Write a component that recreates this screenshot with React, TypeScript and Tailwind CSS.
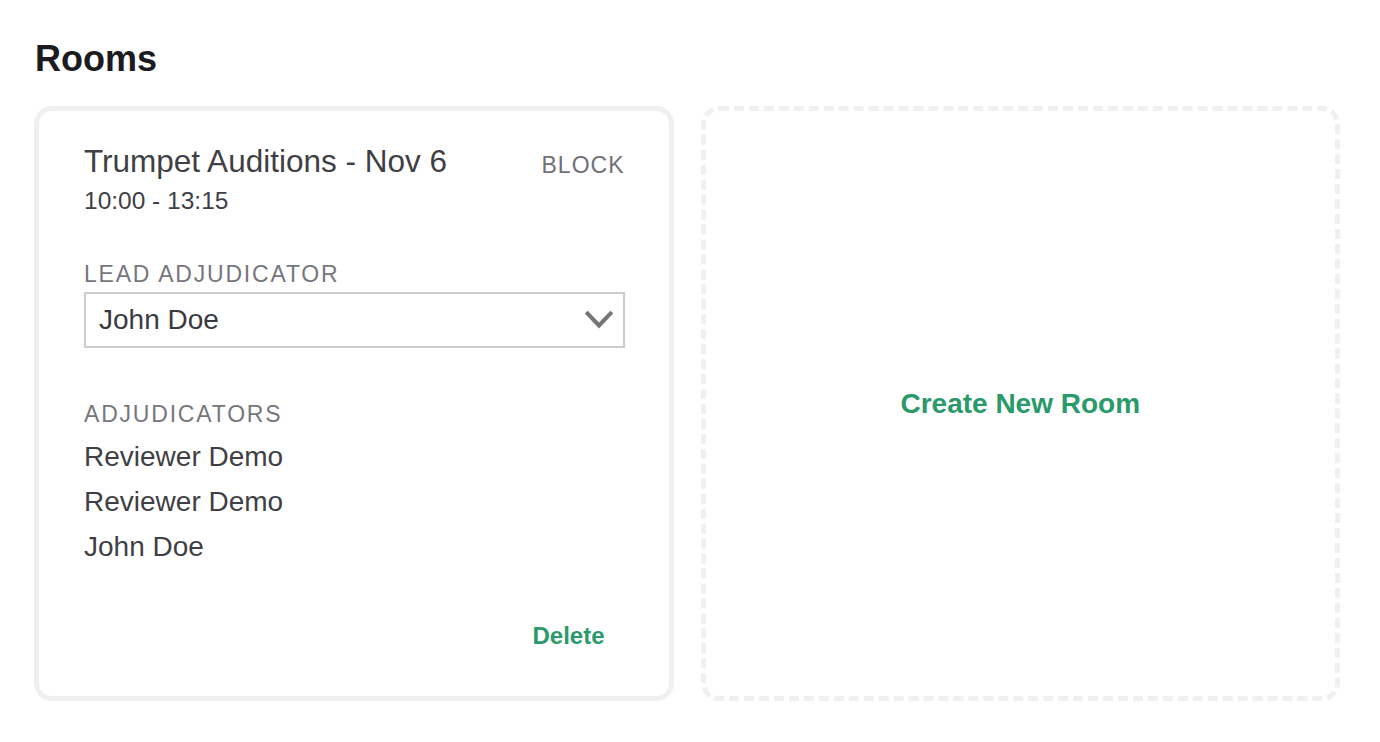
const adjudicators = ['Reviewer Demo', 'Reviewer Demo', 'John Doe'];

function ChevronDown() {
    return (
        <svg width="28" height="18" viewBox="0 0 28 18" fill="none" className="shrink-0">
            <polyline
                points="2.5,2.5 14,14.5 25.5,2.5"
                stroke="#767676"
                strokeWidth="4"
                strokeLinecap="square"
                strokeLinejoin="miter"
            />
        </svg>
    );
}

function RoomCard() {
    return (
        <div className="rounded-[18px] border-[5px] border-[#f0f0f0] bg-white pt-[35px] pb-[48px] pl-[45px] pr-[44px]">
            {/* Header */}
            <div className="flex items-start justify-between">
                <div>
                    <div className="text-[31.5px] leading-[31px] text-[#3f3f45]">Trumpet Auditions - Nov 6</div>
                    <div className="mt-[12px] text-[24.5px] leading-[24px] text-[#3f3f45]">10:00 - 13:15</div>
                </div>
                <div className="mt-[7px] text-[23px] leading-[24px] tracking-[1px] text-[#717077]">BLOCK</div>
            </div>

            {/* Lead adjudicator */}
            <div className="mt-[50px] text-[23px] leading-[22px] tracking-[1.8px] text-[#77767d]">LEAD ADJUDICATOR</div>
            <div className="mt-[7px] flex h-[56px] items-center justify-between border-2 border-[#cccccc] bg-white pl-[13px] pr-[10px]">
                <span className="text-[28px] leading-[28px] text-[#3a3a3f]">John Doe</span>
                <ChevronDown />
            </div>

            {/* Adjudicators */}
            <div className="mt-[55px] text-[23px] leading-[22px] tracking-[1.8px] text-[#77767d]">ADJUDICATORS</div>
            <ul className="mt-[9px]">
                {adjudicators.map((name, i) => (
                    <li key={i} className="text-[28px] leading-[45px] text-[#3f3f45]">
                        {name}
                    </li>
                ))}
            </ul>

            <div className="mt-[55px] flex justify-end pr-[20px]">
                <button type="button" className="text-[24px] leading-[24px] font-bold text-[#2a9a6a]">
                    Delete
                </button>
            </div>
        </div>
    );
}

export default function App() {
    return (
        <div className="min-h-screen bg-white pt-[41px] pl-[34px] pr-[40px]" style={{ fontFamily: '"Liberation Sans", Arial, Helvetica, sans-serif' }}>
            <h1 className="ml-[1px] text-[36px] leading-[36px] font-bold text-[#1b1b20]">Rooms</h1>

            <div className="mt-[29px] grid grid-cols-2 gap-[27px]">
                <RoomCard />
                <button
                    type="button"
                    className="flex items-center justify-center rounded-[18px] border-[5px] border-dashed border-[#f0f0f0] bg-white"
                >
                    <span className="text-[28px] leading-[28px] font-bold text-[#2a9a6a]">Create New Room</span>
                </button>
            </div>
        </div>
    );
}
